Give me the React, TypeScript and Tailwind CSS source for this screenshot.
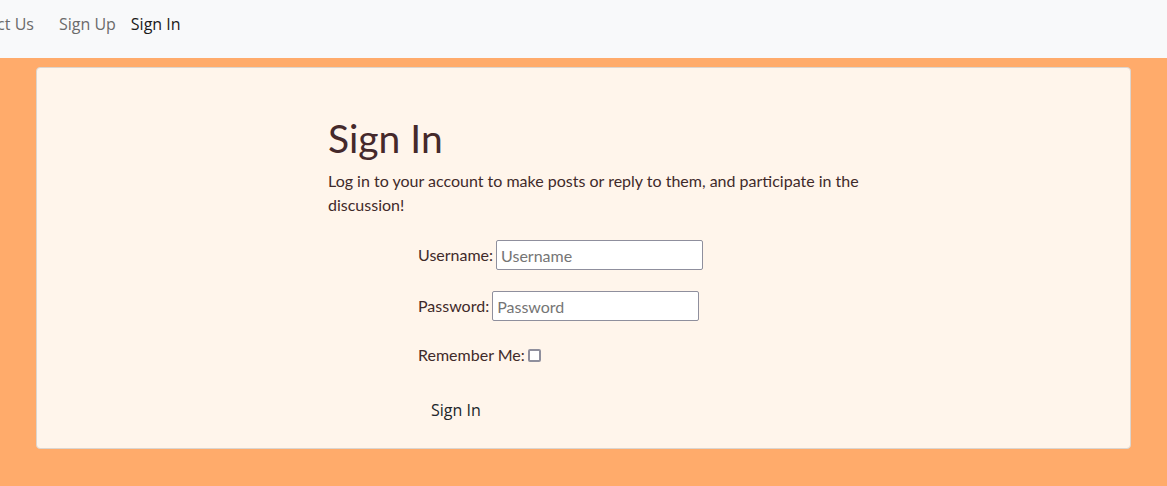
export default function App() {
  return (
    <div className="min-h-[486px] bg-[#ffab6b] overflow-hidden" style={{ fontFamily: 'Lato, sans-serif' }}>
      {/* navbar */}
      <nav className="h-[58px] bg-[#f8f9fa] flex items-center pb-[10px] overflow-hidden text-[16px]" style={{ fontFamily: '"Open Sans", sans-serif' }}>
        <div className="flex items-center -ml-[47px] whitespace-nowrap">
          <span className="text-[#6b6b6b]">Contact Us</span>
          <span className="ml-[25px] text-[#6b6b6b]">Sign Up</span>
          <span className="ml-[15px] text-[#1a1a1a]">Sign In</span>
        </div>
      </nav>

      {/* card */}
      <div className="mx-[36px] mt-[9px] h-[382px] bg-[#fff5eb] border border-[#dcd5cf] rounded-[4px]">
        <div className="ml-[291px] w-[548px] pt-[46px] text-[#3f2a2a]">
          <h1 className="text-[39px] leading-[48px] font-normal text-[#45292b]">Sign In</h1>
          <p className="mt-[7px] text-[16px] leading-[24px]">
            Log in to your account to make posts or reply to them, and participate in the discussion!
          </p>

          <form className="ml-[90px] mt-[13px] flex flex-col text-[16px]">
            <div className="flex items-center gap-[3px] h-[30px] mt-[10px]">
              <label>Username:</label>
              <input
                placeholder="Username"
                className="w-[207px] h-[30px] px-[4px] bg-white border border-[#8f8f9d] rounded-[2px] placeholder:text-[#757575]"
              />
            </div>
            <div className="flex items-center gap-[3px] h-[30px] mt-[21px]">
              <label>Password:</label>
              <input
                type="password"
                placeholder="Password"
                className="w-[207px] h-[30px] px-[4px] bg-white border border-[#8f8f9d] rounded-[2px] placeholder:text-[#757575]"
              />
            </div>
            <div className="flex items-center gap-[3px] mt-[21px] h-[26px]">
              <label>Remember Me:</label>
              <span className="w-[13px] h-[13px] border-2 border-[#8f8f9d] rounded-[2px] bg-white" />
            </div>
            <div className="mt-[24px]">
              <button type="button" className="px-[13px] py-[6px] text-[16px] text-[#212529]" style={{ fontFamily: '"Open Sans", sans-serif' }}>
                Sign In
              </button>
            </div>
          </form>
        </div>
      </div>
    </div>
  );
}
